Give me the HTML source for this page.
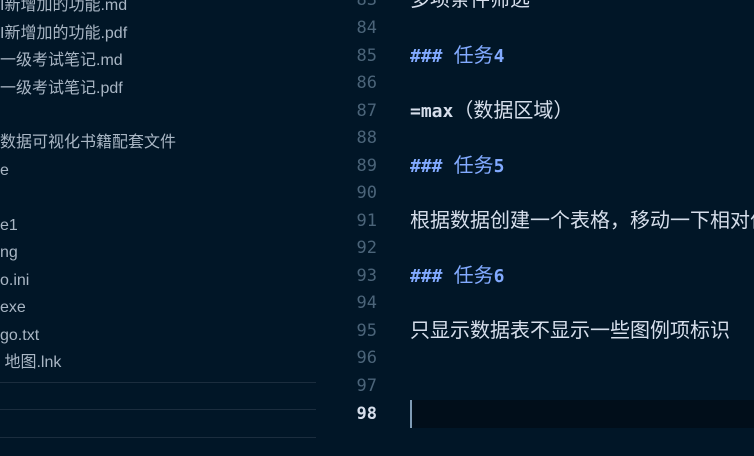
<!DOCTYPE html>
<html><head><meta charset="utf-8"><style>
html,body{margin:0;padding:0;width:754px;height:456px;overflow:hidden;background:#011627;}
body{position:relative;font-family:"Liberation Sans","Noto Sans CJK SC",sans-serif;}
.s{position:absolute;left:0;font-size:16px;color:#a9b6c4;white-space:nowrap;line-height:20px;margin-top:2px;}
.sep{position:absolute;left:0;width:316px;height:1px;background:#1b2d3e;}
.n{position:absolute;left:330px;width:47px;text-align:right;font-family:"DejaVu Sans Mono","Liberation Mono",monospace;font-size:17px;color:#4b6479;line-height:28px;}
.t{position:absolute;left:410px;font-size:20px;color:#d6deeb;white-space:nowrap;line-height:28px;font-family:"Liberation Sans","Noto Sans CJK SC",sans-serif;}
.h{color:#82aaff;}
.m{font-family:"DejaVu Sans Mono",monospace;font-weight:bold;font-size:18px;}
</style></head><body>
<div class="s" style="top:-6px">I新增加的功能.md</div>
<div class="s" style="top:22px">I新增加的功能.pdf</div>
<div class="s" style="top:49px">一级考试笔记.md</div>
<div class="s" style="top:77px">一级考试笔记.pdf</div>
<div class="s" style="top:131px">数据可视化书籍配套文件</div>
<div class="s" style="top:159px">e</div>
<div class="s" style="top:214px">e1</div>
<div class="s" style="top:241px">ng</div>
<div class="s" style="top:269px">o.ini</div>
<div class="s" style="top:296px">exe</div>
<div class="s" style="top:324px">go.txt</div>
<div class="s" style="top:351px">&nbsp;地图.lnk</div>
<div class="sep" style="top:382px"></div>
<div class="sep" style="top:409px"></div>
<div class="sep" style="top:437px"></div>

<div style="position:absolute;left:410px;top:400px;width:344px;height:28px;background:#010e1a"></div>
<div style="position:absolute;left:410px;top:400px;width:2px;height:28px;background:#7f9bb5"></div>

<div class="n" style="top:-14px">83</div>
<div class="n" style="top:14px">84</div>
<div class="n" style="top:42px">85</div>
<div class="n" style="top:69px">86</div>
<div class="n" style="top:97px">87</div>
<div class="n" style="top:124px">88</div>
<div class="n" style="top:152px">89</div>
<div class="n" style="top:179px">90</div>
<div class="n" style="top:207px">91</div>
<div class="n" style="top:234px">92</div>
<div class="n" style="top:262px">93</div>
<div class="n" style="top:289px">94</div>
<div class="n" style="top:317px">95</div>
<div class="n" style="top:344px">96</div>
<div class="n" style="top:372px">97</div>
<div class="n" style="top:400px;color:#d6deeb;font-weight:bold">98</div>

<div class="t" style="top:-14px">多项条件筛选</div>
<div class="t h" style="top:42px"><span class="m">###</span>&nbsp; 任务<span class="m">4</span></div>
<div class="t" style="top:97px"><span class="m">=max</span>（数据区域）</div>
<div class="t h" style="top:152px"><span class="m">###</span>&nbsp; 任务<span class="m">5</span></div>
<div class="t" style="top:207px">根据数据创建一个表格，移动一下相对位置</div>
<div class="t h" style="top:262px"><span class="m">###</span>&nbsp; 任务<span class="m">6</span></div>
<div class="t" style="top:317px">只显示数据表不显示一些图例项标识</div>
</body></html>
